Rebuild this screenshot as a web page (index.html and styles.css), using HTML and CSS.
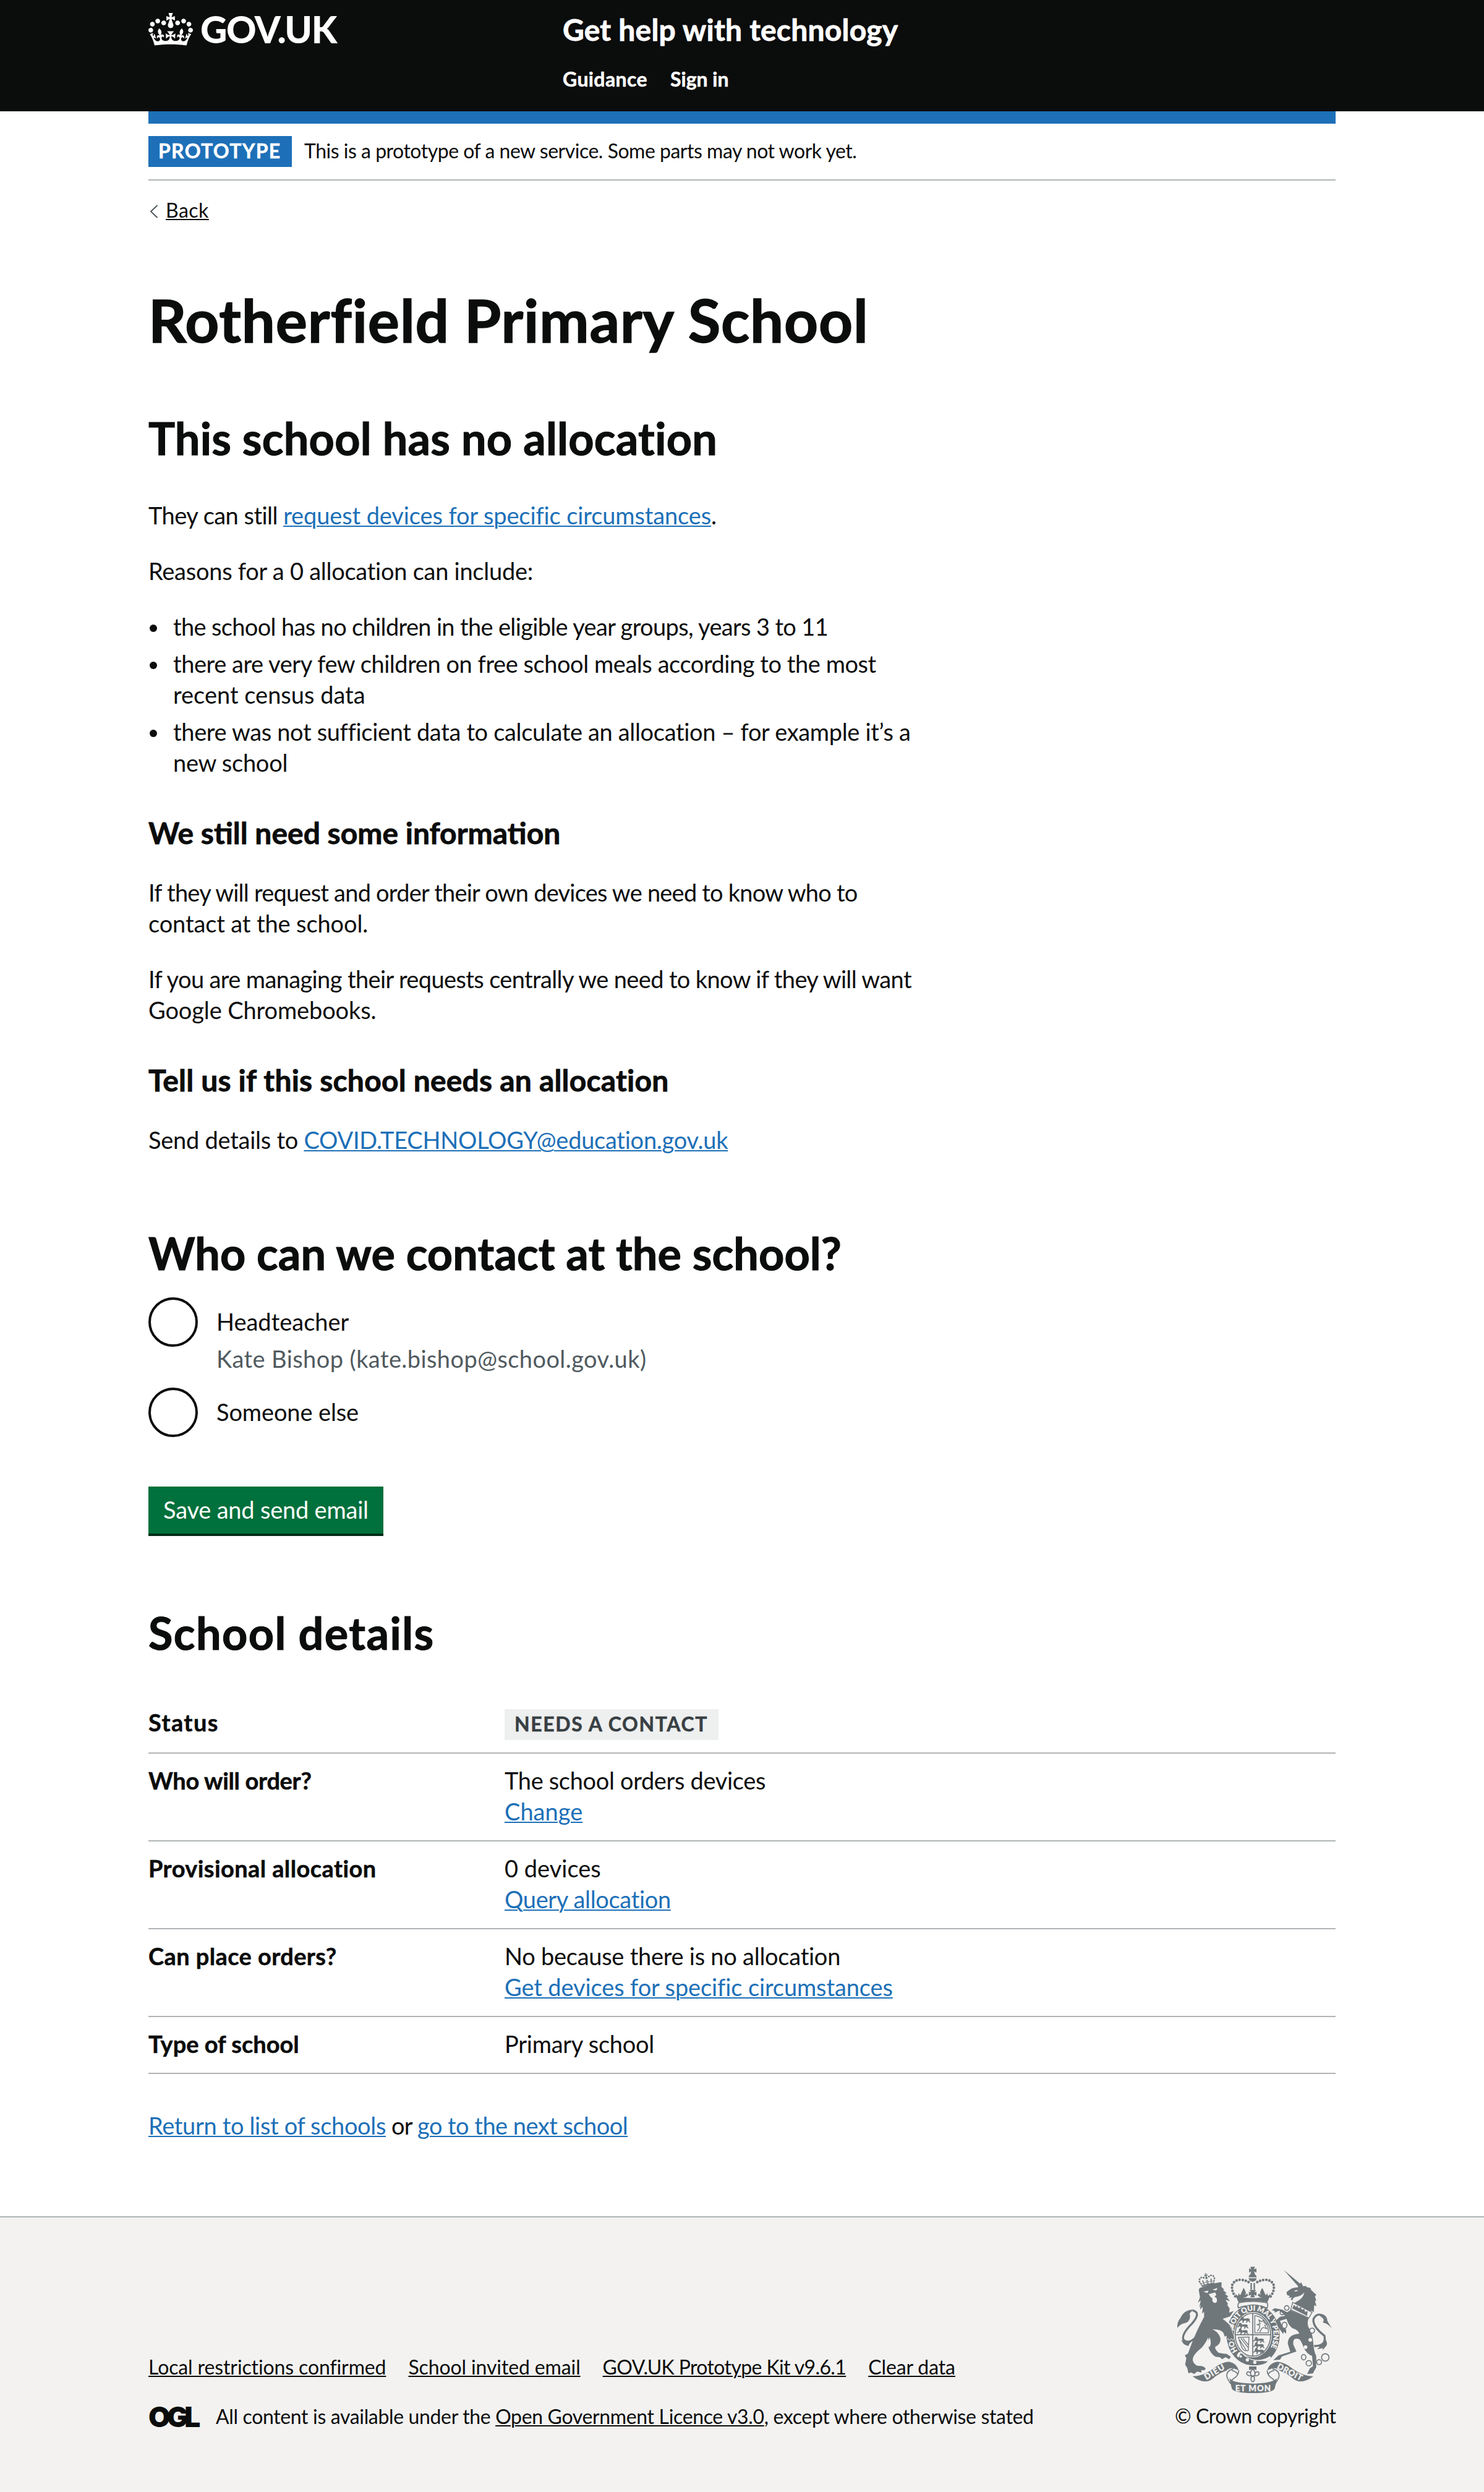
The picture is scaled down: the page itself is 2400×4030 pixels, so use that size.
FILE: index.html
```html
<!DOCTYPE html>
<html lang="en">
<head>
<meta charset="utf-8">
<title>Rotherfield Primary School - Get help with technology</title>
<link rel="stylesheet" href="styles.css">
</head>
<body>
<header class="header">
  <div class="container header-inner">
    <a class="brand" href="#">
      <svg class="brand-crown" viewBox="0 0 132 97" aria-hidden="true">
        <path id="crown" d="M25 30.2c3.5 1.5 7.7-.2 9.1-3.7 1.5-3.6-.2-7.8-3.9-9.2-3.6-1.4-7.6.3-9.1 3.9-1.4 3.5.3 7.5 3.9 9zM9 39.5c3.6 1.5 7.8-.2 9.2-3.7 1.5-3.6-.2-7.8-3.9-9.1-3.6-1.5-7.6.2-9.1 3.8-1.4 3.5.3 7.5 3.8 9zM4.4 57.2c3.5 1.5 7.7-.2 9.1-3.8 1.5-3.6-.2-7.7-3.9-9.1-3.5-1.5-7.6.3-9.1 3.8-1.4 3.5.3 7.6 3.9 9.1zm38.3-21.4c3.5 1.5 7.7-.2 9.1-3.8 1.5-3.6-.2-7.7-3.9-9.1-3.6-1.5-7.6.3-9.1 3.8-1.3 3.6.4 7.7 3.9 9.1zm64.4-5.6c-3.6 1.5-7.8-.2-9.1-3.7-1.5-3.6.2-7.8 3.8-9.2 3.6-1.4 7.7.3 9.2 3.9 1.3 3.5-.4 7.5-3.9 9zm15.9 9.3c-3.6 1.5-7.7-.2-9.1-3.7-1.5-3.6.2-7.8 3.7-9.1 3.6-1.5 7.7.2 9.2 3.8 1.5 3.5-.3 7.5-3.8 9zm4.7 17.7c-3.6 1.5-7.8-.2-9.2-3.8-1.5-3.6.2-7.7 3.9-9.1 3.6-1.5 7.7.3 9.2 3.8 1.3 3.5-.4 7.6-3.9 9.1zM89.3 35.8c-3.6 1.5-7.8-.2-9.2-3.8-1.4-3.6.2-7.7 3.9-9.1 3.6-1.5 7.7.3 9.2 3.8 1.4 3.6-.3 7.7-3.9 9.1zM69.7 17.7l8.9 4.7V9.3l-8.9 2.8c-.2-.3-.5-.6-.9-.9L72.4 0H59.6l3.5 11.2c-.3.3-.6.5-.9.9l-8.8-2.8v13.1l8.8-4.7c.3.3.6.7.9.9l-5 15.4v.1c-.2.8-.4 1.6-.4 2.4 0 4.1 3.1 7.5 7 8.1h.2c.3 0 .7.1 1 .1.4 0 .7 0 1-.1h.2c4-.6 7.1-4.1 7.1-8.1 0-.8-.1-1.7-.4-2.4V34l-5.1-15.4c.4-.2.7-.6 1-.9zM66 92.8c16.9 0 32.8 1.1 47.1 3.2 4-16.9 8.9-26.7 14-33.5l-9.6-3.4c1 4.9 1.1 7.2 0 10.2-1.5-1.4-3-4.3-4.2-8.7L108.6 76c2.8-2 5-3.2 7.5-3.3-4.4 9.4-10 11.9-13.6 11.2-4.3-.8-6.3-4.6-5.6-7.9 1-4.7 5.7-5.9 8-.5 4.3-8.7-3-11.4-7.6-8.8 7.1-7.2 7.9-13.5 2.1-21.1-8 6.1-8.1 12.3-4.5 20.8-4.7-5.4-12.1-2.5-9.5 6.2 3.4-5.2 7.9-2 7.2 3.1-.6 4.3-6.4 7.8-13.5 7.2-10.3-.9-10.9-8-11.2-13.8 2.5-.5 7.1 1.8 11 7.3L80.2 60c-4.1 4.4-8 5.3-12.3 5.4 1.4-4.4 8-11.6 8-11.6H55.5s6.4 7.2 7.9 11.6c-4.2-.1-8-1-12.3-5.4l1.4 16.4c3.9-5.5 8.5-7.7 10.9-7.3-.3 5.8-.9 12.8-11.1 13.8-7.2.6-12.9-2.9-13.5-7.2-.7-5 3.8-8.3 7.1-3.1 2.7-8.7-4.6-11.6-9.4-6.2 3.7-8.5 3.6-14.7-4.6-20.8-5.8 7.6-5 13.9 2.2 21.1-4.7-2.6-11.9.1-7.7 8.8 2.3-5.5 7.1-4.2 8.1.5.7 3.3-1.3 7.1-5.7 7.9-3.5.7-9-1.8-13.5-11.2 2.5.1 4.7 1.3 7.5 3.3l-4.7-15.4c-1.2 4.4-2.7 7.2-4.3 8.7-1.1-3-.9-5.3 0-10.2l-9.5 3.4c5 6.9 9.9 16.7 14 33.5 14.8-2.1 30.8-3.2 47.7-3.2z"/>
      </svg>
      <span class="brand-name">GOV.UK</span>
    </a>
    <div class="header-content">
      <a class="service-name" href="#">Get help with technology</a>
      <nav class="header-nav">
        <a href="#">Guidance</a>
        <a class="tr-a" href="#">Sign in</a>
      </nav>
    </div>
  </div>
</header>

<div class="container">
  <div class="phase-banner">
    <strong class="tag tag-phase">PROTOTYPE</strong>
    <span class="phase-text">This is a prototype of a new service. Some parts may not work yet.</span>
  </div>
  <a class="back-link" href="#">
    <svg class="back-arrow" viewBox="0 0 14 22" aria-hidden="true"><path d="M12.5 1 2 11l10.500 10"/></svg>
    <span class="back-text">Back</span>
  </a>

  <main class="main">
    <h1 class="heading-xl">Rotherfield Primary School</h1>
    <h2 class="heading-l heading-allocation">This school has no allocation</h2>
    <p class="body"><span class="tr-f">They can still </span><a class="link tr-b" href="#">request devices for specific circumstances</a>.</p>
    <p class="body tr-c">Reasons for a 0 allocation can include:</p>
    <ul class="list">
      <li class="tr-h">the school has no children in the eligible year groups, years 3 to 11</li>
      <li><span class="tr-e">there are very few children on free school meals according to the most</span><br><span class="tr-a">recent census data</span></li>
      <li><span class="tr-d">there was not sufficient data to calculate an allocation – for example it’s a</span><br><span class="tr-c">new school</span></li>
    </ul>
    <h3 class="heading-m">We still need some information</h3>
    <p class="body"><span class="tr-i">If they will request and order their own devices we need to know who to</span><br><span class="tr-b">contact at the school.</span></p>
    <p class="body"><span class="tr-g">If you are managing their requests centrally we need to know if they will want</span><br><span class="tr-b">Google Chromebooks.</span></p>
    <h3 class="heading-m tr-p">Tell us if this school needs an allocation</h3>
    <p class="body tr-c">Send details to <a class="link" href="#">COVID.TECHNOLOGY@education.gov.uk</a></p>

    <form class="contact-form">
      <h2 class="heading-l heading-question">Who can we contact at the school?</h2>
      <div class="radio">
        <span class="radio-circle"></span>
        <div class="radio-text">
          <label>Headteacher</label>
          <span class="hint">Kate Bishop (kate.bishop@school.gov.uk)</span>
        </div>
      </div>
      <div class="radio">
        <span class="radio-circle"></span>
        <div class="radio-text"><label class="tr-b">Someone else</label></div>
      </div>
      <button class="button" type="button">Save and send email</button>
    </form>

    <h2 class="heading-l heading-details">School details</h2>
    <dl class="summary">
      <div class="summary-row summary-row-status"><dt class="tr-z">Status</dt><dd><strong class="tag tag-grey">NEEDS A CONTACT</strong></dd></div>
      <div class="summary-row"><dt class="tr-d">Who will order?</dt><dd><span class="tr-d">The school orders devices</span><a class="link" href="#">Change</a></dd></div>
      <div class="summary-row"><dt class="tr-q">Provisional allocation</dt><dd><span>0 devices</span><a class="link tr-d" href="#">Query allocation</a></dd></div>
      <div class="summary-row"><dt class="tr-q">Can place orders?</dt><dd><span class="tr-c">No because there is no allocation</span><a class="link tr-b" href="#">Get devices for specific circumstances</a></dd></div>
      <div class="summary-row"><dt>Type of school</dt><dd><span class="tr-c">Primary school</span></dd></div>
    </dl>
    <p class="body body-end tr-i"><a class="link tr-d" href="#">Return to list of schools</a> or <a class="link tr-f" href="#">go to the next school</a></p>
  </main>
</div>

<footer class="footer">
  <div class="container footer-inner">
    <div class="footer-meta">
      <nav class="footer-nav">
        <a class="tr-b" href="#">Local restrictions confirmed</a>
        <a class="tr-b" href="#">School invited email</a>
        <a class="tr-g" href="#">GOV.UK Prototype Kit v9.6.1</a>
        <a class="tr-b" href="#">Clear data</a>
      </nav>
      <div class="licence">
        <span class="ogl">OGL</span>
        <span class="licence-text">All content is available under the <a href="#">Open Government Licence v3.0</a>, except where otherwise stated</span>
      </div>
    </div>
    <a class="copyright" href="#">
      <svg class="arms" viewBox="120 72 780 624" aria-hidden="true">
        <defs>
          <path id="garter" d="M500 526A99 118 0 0 1 401 408A99 118 0 0 1 500 290A99 118 0 0 1 599 408A99 118 0 0 1 500 526"/>
          <path id="passant" d="M0 8 5 1l7 3 4 7 20-2 8 5-2 8 7 7-8-1-7-7-3 9-6 1 3-10-11-1-4 10-7 1 4-9-8-3-6 6-4-4 8-7z"/>
          <g id="half">
            <!-- arch of pearls, fleur, ribbon end and fold; mirrored for the right side -->
            <path class="pearls" d="M413 221Q391 190 400 160Q418 137 444 141Q476 145 487 160"/>
            <path d="M442 205q6-14 12-26 8 12 11 26l-5 10 10-8 6 8-10 9-24 4-9-13 6-2z"/>
            <path d="M412 207l14 12 4-14 12 24-14 8z"/>
            <path d="M206 609Q258 607 306 572Q345 541 382 538Q420 545 430 580L404 570Q387 566 368 582Q330 596 304 620Q264 652 206 609z"/>
            <path class="line" d="M430 580Q430 606 402 622Q393 628 392 640M404 572Q371 582 372 606Q374 622 392 646M396 580Q420 586 424 598"/>
          </g>
        </defs>
        <use href="#half"/>
        <use href="#half" transform="matrix(-1 0 0 1 998 0)"/>
        <!-- imperial crown -->
        <path d="M486 77h23l-5 13 12-5v21l-12-6 5 14h-23l5-14-11 6V85l11 5z"/>
        <path d="M478 128q2-16 19-17 17 1 20 17zM478 133h39q-1 14-20 17-18-3-19-17z"/>
        <path d="M487 156h7v32h-7zM502 156h7v32h-7zM482 190h32l-8 12 10-4v20l-12-6 4 14h-22l5-14-12 6v-20l11 4z"/>
        <path d="M416 219Q498 240 582 219L569 250Q498 235 429 250z"/>
        <path class="line" d="M430 252Q498 238 568 252Q574 262 567 278Q545 268 534 267M430 252Q424 262 428 277Q446 268 466 267"/>
        <!-- garter and shield -->
        <ellipse cx="500" cy="408" rx="129" ry="148"/>
        <ellipse class="paper" cx="499" cy="407" rx="92" ry="110"/>
        <ellipse class="line" cx="499" cy="407" rx="86" ry="104"/>
        <path class="line" d="M498 303v208M413 407h172"/>
        <use href="#passant" transform="translate(440 318)"/>
        <use href="#passant" transform="translate(430 347)"/>
        <use href="#passant" transform="translate(430 375)"/>
        <use href="#passant" transform="translate(508 416)"/>
        <use href="#passant" transform="translate(508 443)"/>
        <use href="#passant" transform="translate(508 470)"/>
        <path class="fine" d="M508 314v84h66q2-38-24-64-16-16-42-20zM520 390l10-14 2-14-12-4 14-4-6-18 14 8 8-8 4 14 14 4-12 8 10 16-16-6-8 4-10 18M428 420l52-2-4 66q-22 4-30-14zM440 424l36 46M450 424l28 34M434 432l32 50"/>
        <text class="motto ring"><textPath href="#garter" startOffset="88">HO<tspan dx="60">SOIT QUI MAL Y PENSE</tspan></textPath></text>
        <path class="paper" d="M430 492q18-4 26 10 34 34 82 26 26-4 44-18l4 10q-32 30-84 28-44-2-72-32-10 0-8-12z"/>
        <path d="M438 498q12-2 16 8 38 34 92 28l24 4q-26 22-76 16-34-6-54-26-14 0-10-10z"/>
        <circle class="paper" cx="440" cy="512" r="6"/><circle class="paper" cx="472" cy="529" r="8"/><circle class="paper" cx="508" cy="541" r="8"/>
        <!-- lion -->
        <path class="keyline" d="M236 190 244 172 335 152 347 153 346 175 360 188 354 190 372 206 362 208 380 222 372 226 388 244 366 238 378 258 374 262 386 280 384 300 406 291 388 318 352 330Q385 345 392 375L408 420 402 432 394 424 386 434 380 424 370 430 372 412 362 416 356 398Q345 380 302 380Q330 392 340 420Q348 450 316 466Q314 478 332 494Q350 498 372 500L392 514 384 526 366 516 350 526 338 516 318 514Q294 500 284 470L282 420Q268 450 250 470Q205 505 207 530Q210 550 232 558Q262 556 270 572L262 580 248 578 250 590 228 586 214 598 200 590 186 594 180 568 170 552 176 520 168 508 184 498Q205 440 214 420Q230 380 262 320L262 296 252 304 256 272 242 284 246 262 238 276 246 240 232 252 242 225z"/>
        <path class="paper" d="M258 198l26-5-6 12zM303 188l24-8-6 13zM284 210l32-8 5 12-8 8 10 8q6 22-9 23-14-2-12-23l-8-6zM350 328l42 36 10 26 5-4-8-28z"/>
        <path class="paper" d="M289 420q-18 34-2 48 14-16 2-48z"/>
        <path class="paper" d="M238 174Q285 156 338 146L340 152Q290 160 240 181z"/>
        <use href="#crown" transform="translate(228 119) rotate(-13) scale(.63)"/>
        <path class="tail" d="M232 408Q190 458 162 432Q150 406 204 352Q250 298 206 289"/>
        <path d="M210 284Q162 288 148 325Q130 345 132 374Q150 352 176 349Q200 336 192 304zM150 432Q170 446 214 430Q190 448 186 461Q166 458 160 448z"/>
        <!-- unicorn -->
        <path d="M648 92 736 166 722 176z"/>
        <path d="M715 178 733 152 742 172 756 170 760 176 778 180 780 188 796 204 806 212 800 222 806 240 800 244 807 268 796 264 794 298 784 290 776 294 740 285 696 262Q700 250 722 240Q745 225 748 200Q740 215 715 222Q695 222 690 240L682 236 688 226 672 228 678 220 664 214 662 200Q690 175 715 178z"/>
        <path class="paper" d="M698 196q10-8 20-4-8 8-20 4z"/>
        <path class="keyline" d="M680 288 770 326Q760 345 768 370Q790 400 792 450Q795 490 806 510L806 565 790 595 762 598 775 570 790 560 786 510Q760 500 745 470Q735 440 725 430Q690 415 695 455L710 488 640 512 630 528 598 530 622 508 680 490 668 450Q668 405 724 402Q720 385 690 375Q670 360 662 330L630 340 645 375 660 380 660 402 648 392 646 404 636 390 622 372 608 340 630 320 655 315 640 300 626 290 604 300 604 292 590 288 605 278 640 285 665 298z"/>
        <path class="collar" d="M692 250 786 298 770 326 682 286z"/>
        <path d="M690 280 698 262l10 10 6-8 6 14 12-6 4 14 12-4 4 14 12-4-2 24z"/>
        <g class="line"><circle cx="663" cy="277" r="11"/><circle cx="641" cy="300" r="10"/><ellipse class="paper" cx="652" cy="361" rx="12" ry="15"/><circle class="paper" cx="786" cy="387" r="12"/><ellipse cx="745" cy="516" rx="11" ry="13"/><circle cx="770" cy="545" r="13"/><circle cx="820" cy="540" r="12"/><circle cx="850" cy="517" r="18"/></g>
        <circle class="paper" cx="777" cy="432" r="9"/><circle class="paper" cx="754" cy="467" r="9"/>
        <path class="tail" d="M796 462Q856 462 846 412Q786 366 793 330Q808 302 832 312"/>
        <path d="M820 305Q858 306 860 340L882 377Q862 352 838 348Q850 330 826 318zM852 430Q862 450 856 460L836 482 838 472 810 478 822 466 800 458Q842 458 852 430z"/>
        <!-- motto ribbon -->
        <path d="M384 616Q396 642 500 644Q602 642 616 616L605 666Q600 690 500 690Q402 690 396 666z"/>
        <text class="motto" transform="translate(273 627) rotate(-31)" textLength="106">DIEU</text>
        <text class="motto" x="413" y="680" textLength="172">ET MON</text>
        <text class="motto" transform="translate(613 569) rotate(28)" textLength="132">DROIT</text>
        <path d="M480 561h36v18q-18-10-36 0z"/>
        <path class="line" d="M498 572q-18 18-6 38h12q12-20-6-38zM490 606q-2-24-18-18-10 12 8 18h38q16-6 8-18-18-6-18 18M490 612v16q8 14 16 0v-16"/>
      </svg>
      <span>© Crown copyright</span>
    </a>
  </div>
</footer>
</body>
</html>
```

FILE: styles.css
```css
* { box-sizing: border-box; }
body {
  margin: 0;
  background: #fff;
  color: #0b0c0c;
  font: 400 38px/50px Lato, "Liberation Sans", sans-serif;
}
h1, h2, h3, p, ul, dl, dd { margin: 0; }
a { color: inherit; text-decoration: none; }
.container { width: 1920px; margin: 0 auto; }

/* Header */
.header { height: 180px; background: #0b0c0c; color: #fff; }
.header-inner { display: flex; height: 200px; border-bottom: 20px solid #1d70b8; }
.brand { display: flex; align-items: flex-start; width: 670px; gap: 12px; }
.brand-crown { width: 72px; height: 53px; margin-top: 21px; fill: currentColor; }
.brand-name { margin-top: 17px; font-size: 60px; line-height: 60px; font-weight: 900; letter-spacing: -1.4px; }
.header-content { display: flex; flex-direction: column; gap: 30px; padding-top: 18px; }
.service-name { font-size: 48px; line-height: 60px; font-weight: 700; letter-spacing: .2px; -webkit-text-stroke: .8px; }
.header-nav { display: flex; gap: 37px; font-size: 32px; line-height: 40px; font-weight: 700; letter-spacing: .4px; -webkit-text-stroke: .5px; }

/* Phase banner and back link */
.phase-banner { display: flex; gap: 20px; height: 112px; padding-top: 40px; border-bottom: 2px solid #b1b4b6; }
.tag { display: block; padding: 4px 16px 6px; height: 50px; font-size: 32px; line-height: 40px; font-weight: 700; -webkit-text-stroke: .5px; }
.tag-phase { width: 232px; background: #1d70b8; color: #fff; letter-spacing: 1.3px; }
.phase-text { padding-top: 4px; font-size: 32px; line-height: 40px; letter-spacing: -.49px; }
.back-link { display: flex; width: fit-content; margin-top: 28px; font-size: 32px; line-height: 40px; letter-spacing: .5px; }
.back-arrow { width: 14px; height: 22px; margin: 11px 12px 0 2px; fill: none; stroke: #505a5f; stroke-width: 2; }
.back-text { text-decoration: underline; text-decoration-thickness: 2px; text-underline-offset: 2px; }

/* Typography */
.main { padding-top: 107px; }
.heading-xl { font-size: 96px; line-height: 100px; letter-spacing: .8px; -webkit-text-stroke: 1.4px; }
.heading-l { margin: 104px 0 62px; font-size: 72px; line-height: 75px; letter-spacing: .1px; -webkit-text-stroke: 1.1px; }
.heading-allocation { letter-spacing: .25px; }
.heading-m { margin: 59px 0 41px; font-size: 48px; line-height: 60px; -webkit-text-stroke: .8px; }
.body { margin-bottom: 40px; }
.link { color: #1d70b8; }
.link, .footer-nav a, .licence-text a { text-decoration: underline; text-decoration-thickness: 2px; text-underline-offset: 2px; }
.list { display: flex; flex-direction: column; gap: 10px; padding: 0; list-style: none; }
.list li { position: relative; padding-left: 40px; }
.list li::before { content: ""; position: absolute; left: 2px; top: 22px; width: 12px; height: 12px; border-radius: 50%; background: #0b0c0c; }

/* Tracking steps */
.tr-z { letter-spacing: 1.4px; }
.tr-q { letter-spacing: .4px; }
.tr-p { letter-spacing: .2px; }
.tr-a { letter-spacing: 0; }
.tr-b { letter-spacing: -.12px; }
.tr-c { letter-spacing: -.26px; }
.tr-d { letter-spacing: -.34px; }
.tr-e { letter-spacing: -.45px; }
.tr-f { letter-spacing: -.53px; }
.tr-g { letter-spacing: -.63px; }
.tr-h { letter-spacing: -.66px; }
.tr-i { letter-spacing: -.78px; }

/* Form */
.heading-question { margin: 121px 0 34px; }
.radio { display: flex; gap: 30px; margin-bottom: 22px; }
.radio-circle { width: 80px; height: 80px; flex: none; border: 4px solid #0b0c0c; border-radius: 50%; }
.radio-text { display: flex; flex-direction: column; gap: 10px; padding-top: 14px; }
.radio:last-of-type { margin-bottom: 80px; }
.hint { color: #505a5f; letter-spacing: .42px; }
.button { display: block; height: 76px; padding: 12px 24px 14px; border: 0; background: #00703c; box-shadow: 0 4px 0 #002d18; color: #fff; font: inherit; letter-spacing: -.21px; }

/* Summary list */
.heading-details { margin: 123px 0 82px; letter-spacing: 1.4px; }
.summary-row { display: flex; padding: 18px 0 22px; border-bottom: 2px solid #b1b4b6; }
.summary-row dt { width: 576px; flex: none; font-weight: 700; -webkit-text-stroke: .5px; }
.summary-row dd { display: flex; flex-direction: column; align-items: flex-start; }
.summary-row-status { padding: 0 0 20px; }
.tag-grey { margin-top: 4px; width: 346px; background: #eeefef; color: #383f43; letter-spacing: 1.6px; white-space: nowrap; }
.body-end { margin: 58px 0 122px; }

/* Footer */
.footer { height: 446px; border-top: 2px solid #b1b4b6; background: #f3f2f1; font-size: 32px; line-height: 40px; }
.footer-inner { display: flex; justify-content: space-between; padding-top: 78px; }
.footer-meta { display: flex; flex-direction: column; gap: 40px; padding-top: 144px; }
.footer-nav { display: flex; gap: 36px; }
.licence { display: flex; }
.ogl { width: 109px; font: 900 46px/40px Inter, sans-serif; letter-spacing: -6px; }
.licence-text { letter-spacing: -.35px; }
.copyright { display: flex; flex-direction: column; gap: 15px; width: 260px; letter-spacing: -.46px; white-space: nowrap; }

/* Royal coat of arms */
.arms { width: 260px; height: 208px; fill: #6f777b; }
.arms .paper { fill: #f3f2f1; }
.arms .line { fill: none; stroke: #6f777b; stroke-width: 5; }
.arms .line .paper { fill: #f3f2f1; }
.arms .fine { fill: none; stroke: #6f777b; stroke-width: 4; }
.arms .tail { fill: none; stroke: #6f777b; stroke-width: 10; }
.arms .pearls { fill: none; stroke: #6f777b; stroke-width: 13; stroke-linecap: round; stroke-dasharray: 0 15; }
.arms .keyline { stroke: #f3f2f1; stroke-width: 4; paint-order: stroke; }
.arms .collar { fill: #f3f2f1; stroke: #6f777b; stroke-width: 4; }
.arms .motto { fill: #f3f2f1; stroke: #f3f2f1; stroke-width: 1; font: 900 40px Lato, sans-serif; }
.arms .ring { font-size: 35px; }
```
